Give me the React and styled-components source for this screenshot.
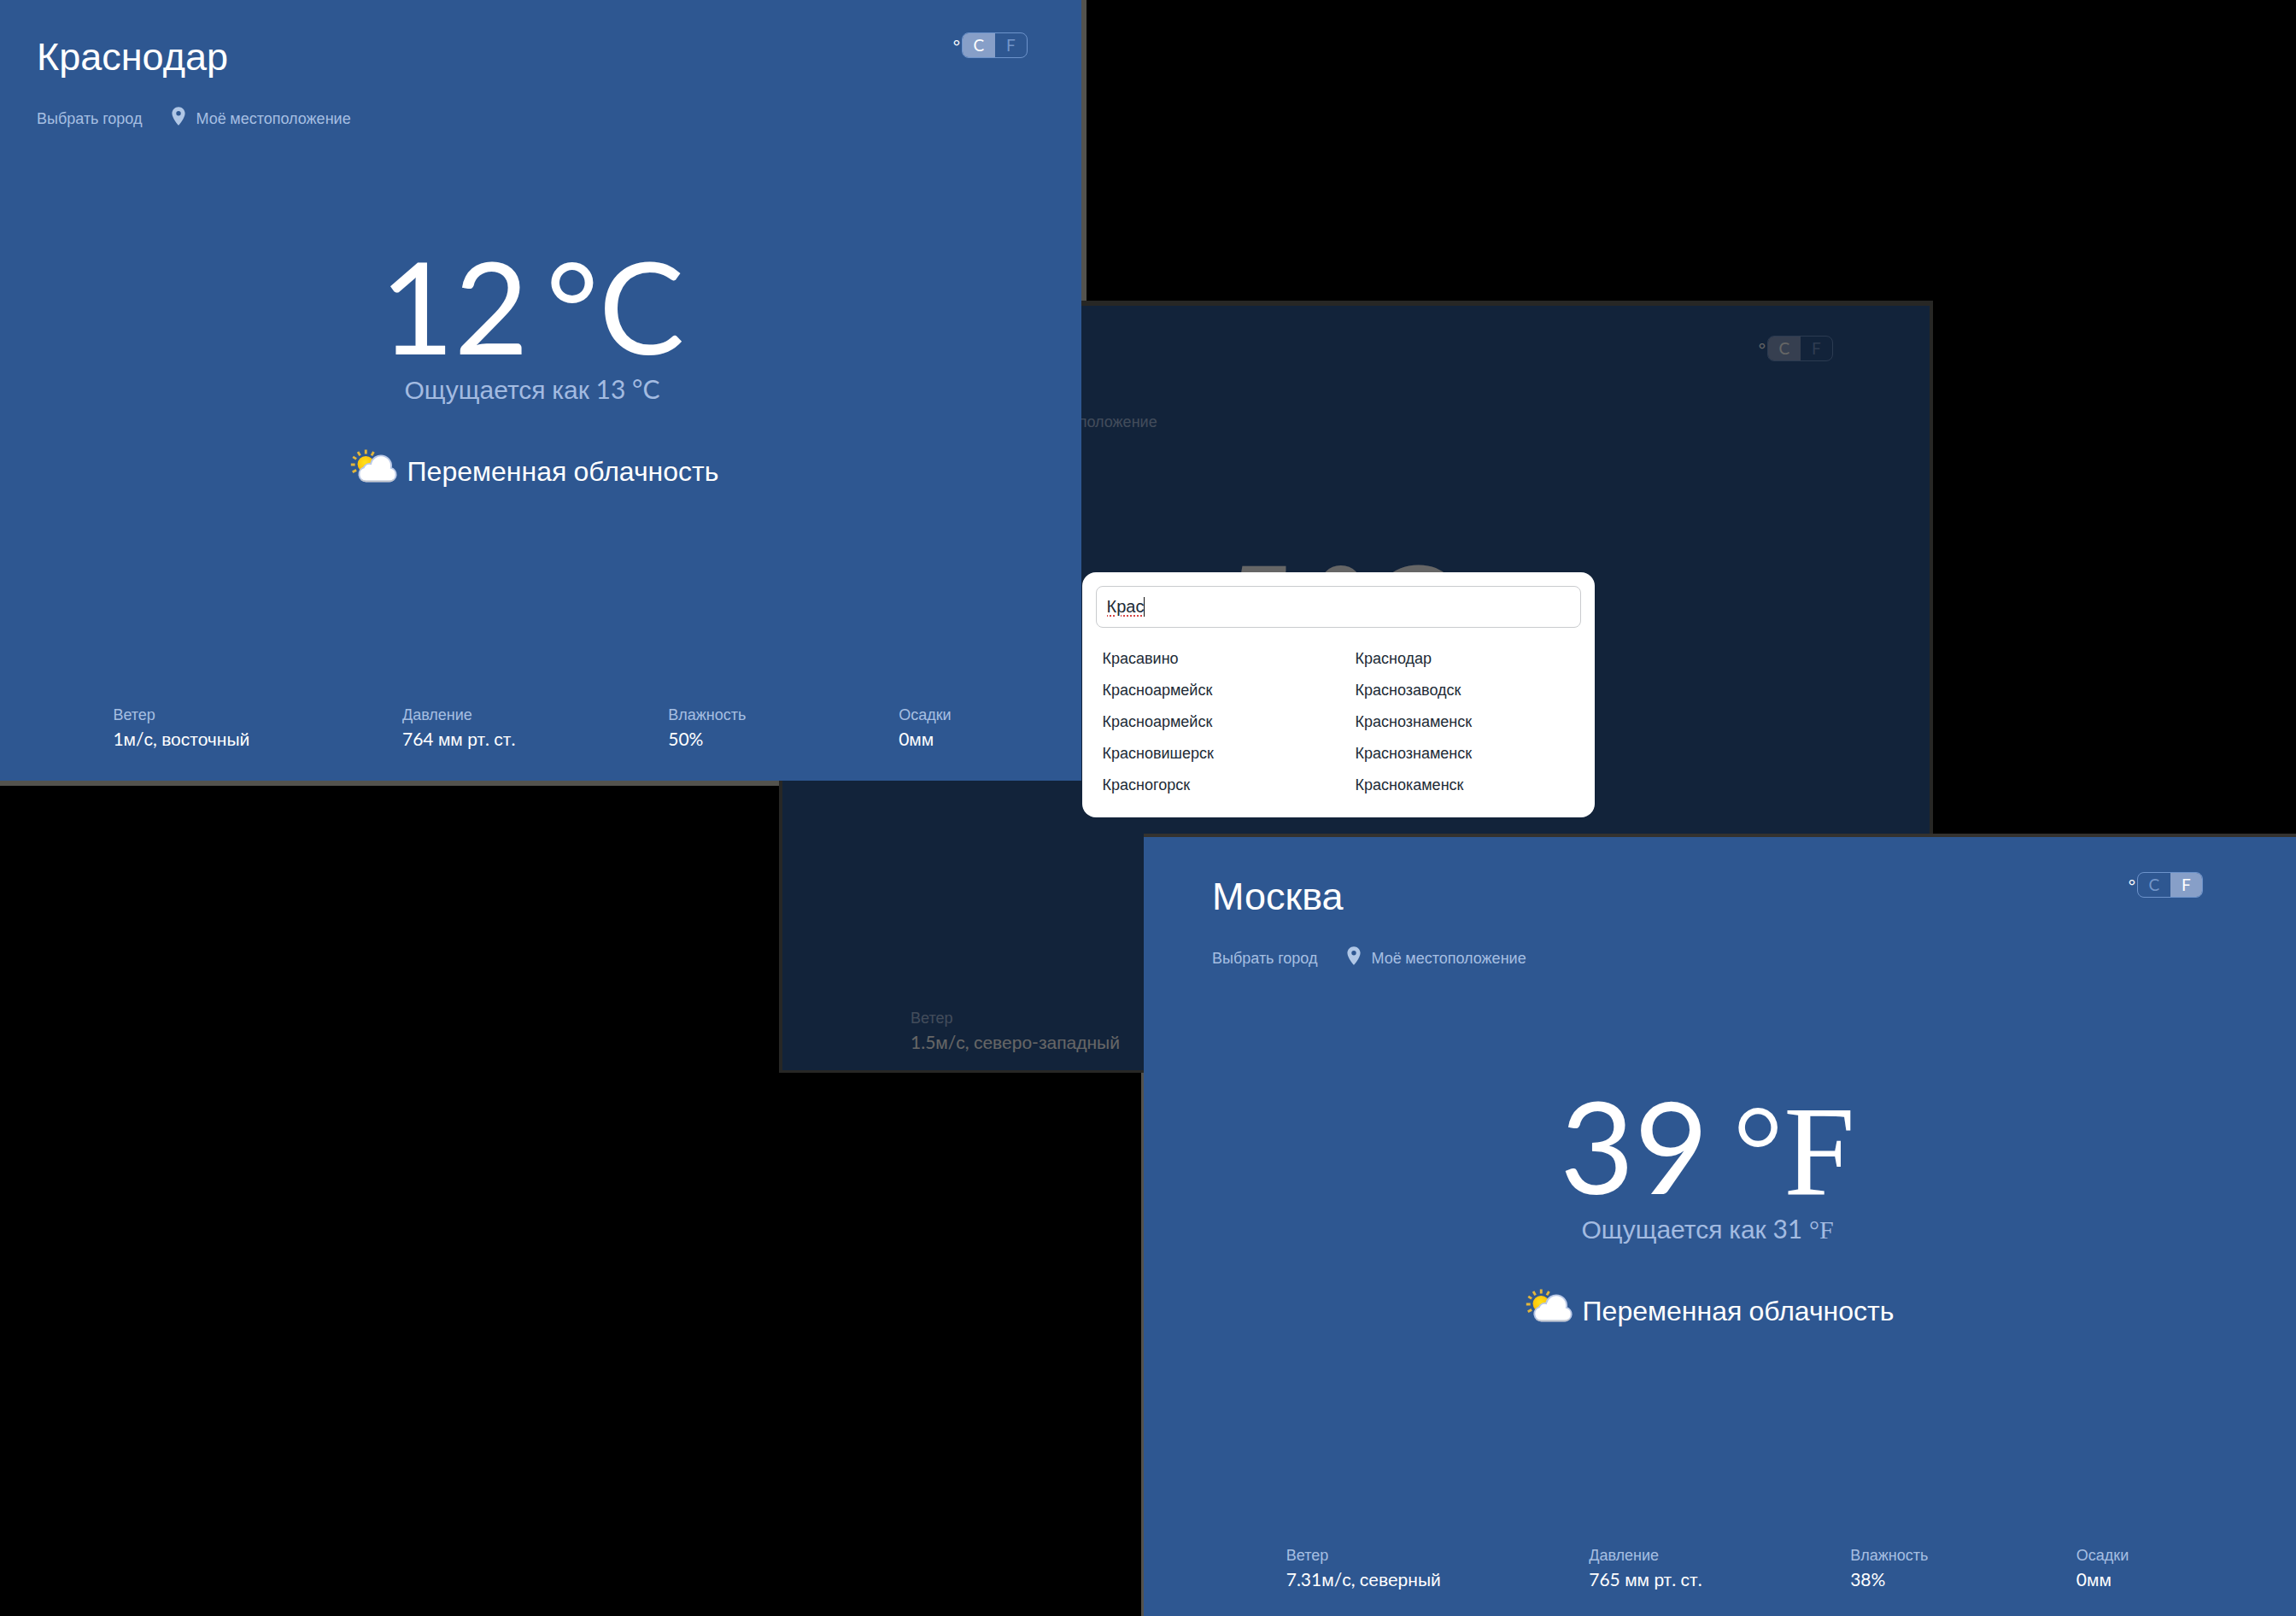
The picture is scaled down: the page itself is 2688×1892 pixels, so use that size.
import React from "react";
import styled, { createGlobalStyle } from "styled-components";

const GlobalStyle = createGlobalStyle`
  *, *::before, *::after { box-sizing: border-box; }
  body {
    margin: 0;
    background: #000;
    font-family: "Liberation Sans", Arial, sans-serif;
    color: #fff;
  }
  button, input { font: inherit; color: inherit; }
  h1, p, dl, dt, dd, ul { margin: 0; padding: 0; }
`;

const Desktop = styled.main`
  display: grid;
  grid-template-columns:
    minmax(0, 912fr) minmax(0, 354fr) minmax(0, 73fr) minmax(0, 924fr)
    minmax(0, 425fr);
  grid-template-rows: 352fr 562fr 66fr 276fr 636fr;
  min-height: 100vh;
`;

/* Window edges that lie under the neighbouring windows */
const Edge = styled.div`
  grid-area: ${(p) => p.$area};
  z-index: 0;
  box-shadow: ${(p) => p.$shadow};
`;

const Window = styled.section`
  grid-area: ${(p) => p.$area};
  position: relative;
  z-index: ${(p) => (p.$dimmed ? 1 : 2)};
  display: flex;
  flex-direction: column;
  min-width: 0;
  background: #2e5791;
  padding: ${(p) => p.$padding};
  ${(p) =>
    p.$dimmed &&
    `border: solid #272725;
     border-width: 6px 4px 3px;`}
  ${(p) => p.$topEdge && "box-shadow: 0 -4px 0 #34322f;"}
`;

const Header = styled.header`
  display: flex;
  justify-content: space-between;
  align-items: flex-start;
`;

const City = styled.h1`
  min-height: 58px;
  font-size: 45px;
  line-height: 58px;
  font-weight: 400;
`;

const Units = styled.div`
  display: flex;
  align-items: center;
  gap: 2px;
  font-family: Lato, sans-serif;
  font-size: 20px;
  line-height: 24px;
`;

const Segments = styled.div`
  display: flex;
  width: 77px;
  height: 30px;
  border: 1px solid #6d93cb;
  border-radius: 8px;
  overflow: hidden;
`;

const Segment = styled.button`
  flex: 1;
  padding: 0;
  border: 0;
  background: ${(p) => (p.$active ? "#879fc8" : "transparent")};
  color: ${(p) => (p.$active ? "#fff" : "#7396ca")};
  font-size: 19px;
  line-height: 24px;
`;

const Actions = styled.nav`
  display: flex;
  align-items: center;
  gap: 30px;
  margin-top: 27px;
  min-height: 30px;
`;

const Action = styled.button`
  display: flex;
  align-items: center;
  gap: 7px;
  padding: 0;
  border: 0;
  background: none;
  color: #a6bfe2;
  font-size: 18px;
  line-height: 24px;
  white-space: nowrap;
`;

const PinIcon = styled.svg`
  width: 26px;
  height: 26px;
  margin-bottom: 4px;
  fill: #b0c7e6;
`;

const Temperature = styled.p`
  display: flex;
  justify-content: center;
  align-items: baseline;
  gap: ${(p) => (p.$unit === "F" ? "28px" : "20px")};
  height: 150px;
  margin-top: 129px;
  font-family: Lato, sans-serif;
  font-size: 150px;
  line-height: 150px;
`;

const FeelsLike = styled.p`
  margin-top: 5px;
  color: #a3bbe1;
  font-size: 30px;
  line-height: 36px;
  text-align: center;
`;

const Condition = styled.p`
  display: flex;
  align-items: center;
  justify-content: center;
  gap: 8px;
  margin-top: 51px;
  font-size: 32px;
  line-height: 40px;
`;

const CloudIcon = styled.svg`
  width: 64px;
  height: 40px;
  margin-bottom: 10px;
`;

const Stats = styled.dl`
  display: flex;
  justify-content: ${(p) => (p.$single ? "flex-start" : "space-around")};
  padding-left: ${(p) => (p.$single ? "79px" : "0")};
  margin-top: auto;
`;

const Stat = styled.div`
  white-space: nowrap;
`;

const StatName = styled.dt`
  color: #a6bfe2;
  font-size: 18px;
  line-height: 24px;
`;

const StatValue = styled.dd`
  margin-top: 2px;
  font-size: 21px;
  line-height: 28px;
`;

const Latin = styled.span`
  font-family: Lato, sans-serif;
  white-space: pre-wrap;
`;

const Degrees = styled.span`
  font-family: ${(p) =>
    p.$unit === "F"
      ? '"Liberation Serif", "Times New Roman", serif'
      : "Lato, sans-serif"};
  line-height: 1;
`;

const Backdrop = styled.div`
  position: absolute;
  inset: 0;
  display: flex;
  align-items: center;
  justify-content: center;
  padding: 16px 113px 0 71px;
  background: rgba(0, 0, 0, 0.6);
`;

const Dialog = styled.div`
  width: 600px;
  padding: 16px;
  border-radius: 16px;
  background: #fff;
  color: #212b36;
`;

const SearchField = styled.label`
  position: relative;
  display: block;
`;

const SearchInput = styled.input`
  display: block;
  width: 100%;
  height: 49px;
  padding: 0 12px;
  border: 1px solid #c9cbce;
  border-radius: 8px;
  outline: none;
  background: #fff;
  font-size: 20px;
  caret-color: transparent;
  text-decoration: underline dotted #d64545 2px;
  text-underline-offset: 3px;
`;

const Caret = styled.span`
  position: absolute;
  left: 56px;
  top: 13px;
  width: 1px;
  height: 23px;
  background: #111;
`;

const Cities = styled.ul`
  display: grid;
  grid-auto-flow: column;
  grid-template-columns: 1fr 1fr;
  grid-template-rows: repeat(5, 37px);
  column-gap: 24px;
  margin: 17px 0 4px;
  list-style: none;
`;

const CityOption = styled.button`
  width: 100%;
  padding: 8px;
  border: 0;
  background: none;
  font-size: 18px;
  line-height: 22px;
  text-align: left;
`;

/* Digits, spaces and signs are set in Lato, Cyrillic letters in the base face */
function Mixed({ children }) {
  return children
    .split(/([^\u0400-\u04ff]+)/)
    .filter(Boolean)
    .map((run, i) =>
      /[\u0400-\u04ff]/.test(run) ? run : <Latin key={i}>{run}</Latin>
    );
}

function UnitSwitch({ unit }) {
  return (
    <Units>
      <span>°</span>
      <Segments role="group" aria-label="°">
        {["C", "F"].map((u) => (
          <Segment key={u} type="button" $active={u === unit} aria-pressed={u === unit}>
            {u}
          </Segment>
        ))}
      </Segments>
    </Units>
  );
}

function PartlyCloudy({ id }) {
  return (
    <CloudIcon viewBox="1 0 66 41" aria-hidden="true">
      <defs>
        <radialGradient id={id} cx="0.45" cy="0.4" r="0.65">
          <stop offset="0" stopColor="#ffe11a" />
          <stop offset="0.6" stopColor="#fdc80d" />
          <stop offset="1" stopColor="#e9a313" />
        </radialGradient>
      </defs>
      <g stroke="#e2b63c" strokeWidth="3">
        <path d="M25 .5v5M15.500 3l2.600 4.500M34.500 3l-2.600 4.500M9.500 9l4 2.600M7 18.500h5M9 27.500l4.500-2.500" />
      </g>
      <circle cx="25" cy="18" r="10" fill={`url(#${id})`} />
      <path
        d="M25 38.500a8.500 8.500 0 0 1-2.500-16.500 7.500 7.500 0 0 1 8.500-4.500 12.500 12.500 0 0 1 24.500 5 8.200 8.200 0 0 1-1 16z"
        fill="#fff"
        stroke="#b9c8e6"
        strokeWidth="2"
      />
      <path d="M19 36.500q3 2.200 7 2h27q4 0 6-2" fill="none" stroke="#c4c6cc" strokeWidth="1.500" />
    </CloudIcon>
  );
}

function Weather({ id, city, unit, temperature, feels, condition, stats }) {
  return (
    <>
      <Header>
        <City as={city ? "h1" : "div"}>{city}</City>
        <UnitSwitch unit={unit} />
      </Header>
      <Actions>
        <Action type="button">
          <span><Mixed>Выбрать город</Mixed></span>
        </Action>
        <Action type="button">
          <PinIcon viewBox="0 0 24 24" aria-hidden="true">
            <path d="M12 2C8.130 2 5 5.130 5 9c0 5.250 7 13 7 13s7-7.750 7-13c0-3.870-3.130-7-7-7zm0 9.500a2.500 2.500 0 0 1 0-5 2.500 2.500 0 0 1 0 5z" />
          </PinIcon>
          <span><Mixed>Моё местоположение</Mixed></span>
        </Action>
      </Actions>
      <Temperature $unit={unit}>
        <span>{temperature}</span>{" "}
        <Degrees $unit={unit}>°{unit}</Degrees>
      </Temperature>
      {feels && (
        <FeelsLike>
          <Mixed>{`Ощущается как ${feels} `}</Mixed>
          <Degrees $unit={unit}>°{unit}</Degrees>
        </FeelsLike>
      )}
      {condition && (
        <Condition>
          <PartlyCloudy id={id} />
          <span><Mixed>{condition}</Mixed></span>
        </Condition>
      )}
      <Stats $single={stats.length === 1}>
        {stats.map(([name, value]) => (
          <Stat key={name}>
            <StatName>{name}</StatName>
            <StatValue><Mixed>{value}</Mixed></StatValue>
          </Stat>
        ))}
      </Stats>
    </>
  );
}

const cities = [
  "Красавино",
  "Красноармейск",
  "Красноармейск",
  "Красновишерск",
  "Красногорск",
  "Краснодар",
  "Краснозаводск",
  "Краснознаменск",
  "Краснознаменск",
  "Краснокаменск",
];

export default function App() {
  return (
    <>
      <GlobalStyle />
      <Desktop>
        <Edge
          $area="1 / 1 / 3 / 3"
          $shadow="6px 0 0 #54534e, 0 6px 0 #54534e, 6px 6px 0 #54534e"
        />
        <Edge $area="4 / 4 / 6 / 6" $shadow="-3px 0 0 #54534e" />

        <Window $area="2 / 2 / 5 / 5" $dimmed $padding="35px 113px 18px 71px">
          <Weather
            unit="C"
            temperature={5}
            stats={[["Ветер", "1.5м/с, северо-западный"]]}
          />
          <Backdrop>
            <Dialog role="dialog">
              <SearchField>
                <SearchInput type="text" defaultValue="Крас" aria-label="Выбрать город" />
                <Caret />
              </SearchField>
              <Cities>
                {cities.map((name, i) => (
                  <li key={i}>
                    <CityOption type="button">{name}</CityOption>
                  </li>
                ))}
              </Cities>
            </Dialog>
          </Backdrop>
        </Window>

        <Window $area="1 / 1 / 3 / 3" $padding="38px 63px 34px 43px">
          <Weather
            id="sun-krasnodar"
            city="Краснодар"
            unit="C"
            temperature={12}
            feels={13}
            condition="Переменная облачность"
            stats={[
              ["Ветер", "1м/с, восточный"],
              ["Давление", "764 мм рт. ст."],
              ["Влажность", "50%"],
              ["Осадки", "0мм"],
            ]}
          />
        </Window>

        <Window $area="4 / 4 / 6 / 6" $topEdge $padding="41px 109px 28px 80px">
          <Weather
            id="sun-moscow"
            city="Москва"
            unit="F"
            temperature={39}
            feels={31}
            condition="Переменная облачность"
            stats={[
              ["Ветер", "7.31м/с, северный"],
              ["Давление", "765 мм рт. ст."],
              ["Влажность", "38%"],
              ["Осадки", "0мм"],
            ]}
          />
        </Window>
      </Desktop>
    </>
  );
}
